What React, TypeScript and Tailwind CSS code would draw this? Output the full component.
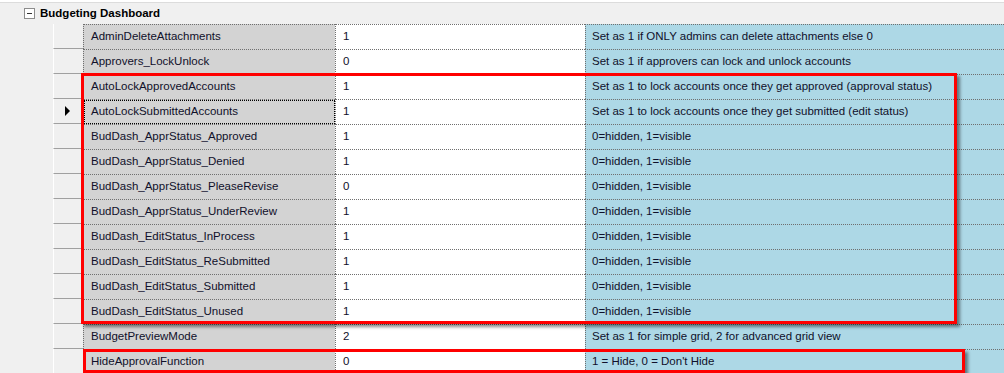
import React from 'react';

type Row = { name: string; value: string; desc: string };

const rows: Row[] = [
  { name: 'AdminDeleteAttachments', value: '1', desc: 'Set as 1 if ONLY admins can delete attachments else 0' },
  { name: 'Approvers_LockUnlock', value: '0', desc: 'Set as 1 if approvers can lock and unlock accounts' },
  { name: 'AutoLockApprovedAccounts', value: '1', desc: 'Set as 1 to lock accounts once they get approved (approval status)' },
  { name: 'AutoLockSubmittedAccounts', value: '1', desc: 'Set as 1 to lock accounts once they get submitted (edit status)' },
  { name: 'BudDash_ApprStatus_Approved', value: '1', desc: '0=hidden, 1=visible' },
  { name: 'BudDash_ApprStatus_Denied', value: '1', desc: '0=hidden, 1=visible' },
  { name: 'BudDash_ApprStatus_PleaseRevise', value: '0', desc: '0=hidden, 1=visible' },
  { name: 'BudDash_ApprStatus_UnderReview', value: '1', desc: '0=hidden, 1=visible' },
  { name: 'BudDash_EditStatus_InProcess', value: '1', desc: '0=hidden, 1=visible' },
  { name: 'BudDash_EditStatus_ReSubmitted', value: '1', desc: '0=hidden, 1=visible' },
  { name: 'BudDash_EditStatus_Submitted', value: '1', desc: '0=hidden, 1=visible' },
  { name: 'BudDash_EditStatus_Unused', value: '1', desc: '0=hidden, 1=visible' },
  { name: 'BudgetPreviewMode', value: '2', desc: 'Set as 1 for simple grid, 2 for advanced grid view' },
  { name: 'HideApprovalFunction', value: '0', desc: '1 = Hide, 0 = Don\'t Hide' },
];

const GridRow: React.FC<{ row: Row; current?: boolean }> = ({ row, current }) => (
  <div className="flex h-[25px] shrink-0">
    {/* row header */}
    <div className="w-[30px] shrink-0 border-l border-white border-b border-b-[#a0a0a0] bg-[#f0f0f0] flex items-center justify-center">
      {current && (
        <svg width="6" height="10" viewBox="0 0 6 10" className="ml-[-2px]">
          <path d="M0 0 L5 5 L0 10 Z" fill="#000" />
        </svg>
      )}
    </div>
    <div className="w-[252px] shrink-0 bg-[#d3d3d3] border-t border-l border-dotted border-[#6f6f6f] relative flex items-center pl-[7px]">
      {current && <div className="absolute inset-0 border border-dotted border-black" />}
      {row.name}
    </div>
    <div className="w-[250px] shrink-0 bg-white border-t border-l border-dotted border-[#6f6f6f] flex items-center pl-[7px]">
      {row.value}
    </div>
    <div className="flex-1 bg-[#add8e6] border-t border-l border-dotted border-[#6f6f6f] flex items-center pl-[6px] whitespace-nowrap">
      {row.desc}
    </div>
  </div>
);

export default function App() {
  return (
    <div
      className="relative w-[1004px] h-[373px] overflow-hidden bg-[#f0f0f0] text-[11.5px] text-[#10102a]"
      style={{ fontFamily: '"Liberation Sans", Arial, sans-serif' }}
    >
      <div className="h-[3px] bg-white border-b border-[#dcdcdc]" />
      {/* group header */}
      <div className="h-[21px] flex items-center pl-[24px]">
        <div className="w-[11px] h-[11px] border border-[#8c8c8c] bg-white flex items-center justify-center">
          <div className="w-[5px] h-px bg-[#333]" />
        </div>
        <span className="ml-[5px] font-bold text-[11.5px] text-black">Budgeting Dashboard</span>
      </div>
      {/* grid rows */}
      <div className="flex flex-col pl-[53px]">
        {rows.map((r, i) => (
          <GridRow key={r.name} row={r} current={i === 3} />
        ))}
      </div>

      {/* red highlight boxes */}
      <div className="absolute left-[81px] top-[73px] w-[876px] h-[251px] border-[3px] border-[#ff0000] shadow-[3px_3px_3px_rgba(0,0,0,0.45)]" />
      <div className="absolute left-[83px] top-[349px] w-[882px] h-[24px] border-[3px] border-[#ff0000] shadow-[3px_3px_3px_rgba(0,0,0,0.45)]" />
    </div>
  );
}
